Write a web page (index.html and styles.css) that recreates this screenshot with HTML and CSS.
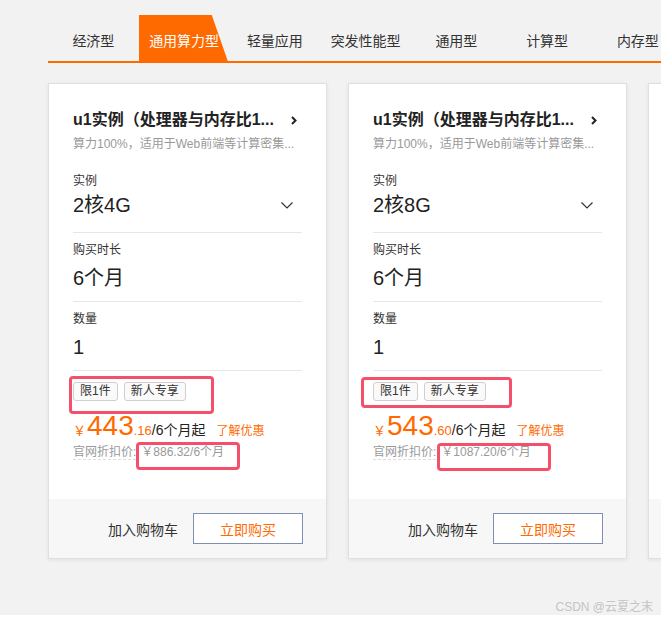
FILE: index.html
```html
<!DOCTYPE html>
<html lang="zh-CN">
<head>
<meta charset="utf-8">
<title>云服务器选购</title>
<link rel="stylesheet" href="styles.css">
</head>
<body>
<div class="page">
  <nav class="tabs">
    <div class="tab">经济型</div>
    <div class="tab active">通用算力型</div>
    <div class="tab">轻量应用</div>
    <div class="tab">突发性能型</div>
    <div class="tab">通用型</div>
    <div class="tab">计算型</div>
    <div class="tab">内存型</div>
  </nav>

  <div class="cards">
    <div class="card">
      <div class="card-body">
        <div class="title-row">
          <span class="title">u1实例（处理器与内存比1...</span>
          <svg class="chev-right" width="6" height="9" viewBox="0 0 6 9"><path d="M1 1 L4.5 4.5 L1 8" fill="none" stroke="#222" stroke-width="2"/></svg>
        </div>
        <div class="desc">算力100%，适用于Web前端等计算密集...</div>
        <div class="field">
          <div class="label">实例</div>
          <div class="value-row">
            <span class="value">2核4G</span>
            <svg class="chev-down" width="12" height="7" viewBox="0 0 12 7"><path d="M0.5 0.5 L6 6 L11.5 0.5" fill="none" stroke="#333" stroke-width="1.2"/></svg>
          </div>
        </div>
        <div class="field">
          <div class="label">购买时长</div>
          <div class="value-row"><span class="value">6个月</span></div>
        </div>
        <div class="field">
          <div class="label">数量</div>
          <div class="value-row"><span class="value">1</span></div>
        </div>
        <div class="tags"><span class="tag">限1件</span><span class="tag">新人专享</span></div>
        <div class="price"><span class="yen">￥</span><span class="big">443</span><span class="cents">.16</span><span class="unit">/6个月起</span><span class="more">了解优惠</span></div>
        <div class="orig"><span class="orig-label">官网折扣价:</span><span class="orig-val">￥886.32/6个月</span></div>
      </div>
      <div class="card-foot">
        <span class="cart">加入购物车</span>
        <button class="buy">立即购买</button>
      </div>
      <div class="mark m1a"></div>
      <div class="mark m1b"></div>
    </div>

    <div class="card">
      <div class="card-body">
        <div class="title-row">
          <span class="title">u1实例（处理器与内存比1...</span>
          <svg class="chev-right" width="6" height="9" viewBox="0 0 6 9"><path d="M1 1 L4.5 4.5 L1 8" fill="none" stroke="#222" stroke-width="2"/></svg>
        </div>
        <div class="desc">算力100%，适用于Web前端等计算密集...</div>
        <div class="field">
          <div class="label">实例</div>
          <div class="value-row">
            <span class="value">2核8G</span>
            <svg class="chev-down" width="12" height="7" viewBox="0 0 12 7"><path d="M0.5 0.5 L6 6 L11.5 0.5" fill="none" stroke="#333" stroke-width="1.2"/></svg>
          </div>
        </div>
        <div class="field">
          <div class="label">购买时长</div>
          <div class="value-row"><span class="value">6个月</span></div>
        </div>
        <div class="field">
          <div class="label">数量</div>
          <div class="value-row"><span class="value">1</span></div>
        </div>
        <div class="tags"><span class="tag">限1件</span><span class="tag">新人专享</span></div>
        <div class="price"><span class="yen">￥</span><span class="big">543</span><span class="cents">.60</span><span class="unit">/6个月起</span><span class="more">了解优惠</span></div>
        <div class="orig"><span class="orig-label">官网折扣价:</span><span class="orig-val">￥1087.20/6个月</span></div>
      </div>
      <div class="card-foot">
        <span class="cart">加入购物车</span>
        <button class="buy">立即购买</button>
      </div>
      <div class="mark m2a"></div>
      <div class="mark m2b"></div>
    </div>

    <div class="card">
      <div class="card-body"></div>
      <div class="card-foot"></div>
    </div>
  </div>

  <div class="watermark">CSDN @云夏之末</div>
</div>
</body>
</html>
```

FILE: styles.css
```css
html, body {
  margin: 0;
  padding: 0;
}
body {
  background: #ffffff;
  font-family: "Liberation Sans", "Noto Sans CJK SC", sans-serif;
  color: #333;
  overflow: hidden;
  width: 661px;
}
.page {
  position: relative;
  height: 615px;
  background: #f2f2f2;
  padding-left: 48px;
  box-sizing: border-box;
  overflow: hidden;
}

/* tabs */
.tabs {
  display: flex;
  margin-top: 15px;
  height: 48px;
  border-bottom: 2px solid #ff6a00;
  box-sizing: border-box;
  width: 700px;
}
.tab {
  position: relative;
  flex: 0 0 90.75px;
  height: 46px;
  display: flex;
  align-items: center;
  justify-content: center;
  padding-top: 4px;
  box-sizing: border-box;
  font-size: 14px;
  color: #333;
  white-space: nowrap;
}
.tab.active {
  color: #fff;
  z-index: 1;
  isolation: isolate;
}
.tab.active::before {
  content: "";
  position: absolute;
  left: 0;
  top: 0;
  bottom: 0;
  width: 90px;
  background: #ff6a00;
  clip-path: polygon(0 0, 73px 0, 89px 100%, 0 100%);
  z-index: -1;
}

/* cards */
.cards {
  display: flex;
  gap: 21px;
  margin-top: 20px;
  width: 900px;
}
.card {
  position: relative;
  flex: 0 0 279px;
  height: 476px;
  display: flex;
  flex-direction: column;
  background: #fff;
  border: 1px solid #e0e0e0;
  box-shadow: 0 1px 4px rgba(0, 0, 0, 0.08);
  box-sizing: border-box;
}
.card-body {
  flex: 1;
  padding: 24px 24px 0 24px;
}
.title-row {
  display: flex;
  align-items: center;
  justify-content: space-between;
  height: 24px;
}
.title {
  font-size: 16px;
  font-weight: bold;
  color: #222;
  line-height: 24px;
  white-space: nowrap;
  overflow: hidden;
}
.chev-right {
  margin-right: 5px;
  flex: none;
}
.desc {
  margin-top: 3px;
  font-size: 12px;
  line-height: 18px;
  color: #999;
  white-space: nowrap;
  overflow: hidden;
}
.field {
  padding: 8px 0 10px;
  border-bottom: 1px solid #e6e6e6;
}
.desc + .field {
  margin-top: 11px;
  padding-bottom: 14px;
}
.label {
  font-size: 12px;
  line-height: 18px;
  color: #333;
}
.value-row {
  margin-top: 6px;
  display: flex;
  align-items: center;
  justify-content: space-between;
  height: 26px;
}
.desc + .field .value-row {
  margin-top: 2px;
}
.value {
  font-size: 20px;
  line-height: 26px;
  color: #222;
}
.chev-down {
  margin-right: 9px;
}
.tags {
  display: flex;
  gap: 6px;
  margin-top: 11px;
}
.tag {
  font-size: 12px;
  line-height: 17px;
  padding: 0 6px;
  border: 1px solid #cfcfcf;
  border-radius: 3px;
  color: #333;
  background: #fafafa;
}
.price {
  margin-top: 10px;
  line-height: 30px;
  height: 30px;
  white-space: nowrap;
}
.yen {
  font-size: 13px;
  color: #ff6a00;
  margin-right: 1px;
}
.big {
  font-size: 28px;
  color: #ff6a00;
}
.cents {
  font-size: 13px;
  color: #ff6a00;
}
.unit {
  font-size: 14px;
  color: #222;
}
.more {
  font-size: 12px;
  color: #ff6a00;
  margin-left: 11px;
}
.orig {
  margin-top: 2px;
  font-size: 12px;
  line-height: 18px;
  color: #999;
  white-space: nowrap;
}
.orig-label {
  border-bottom: 1px dashed #ddd;
}
.orig-val {
  margin-left: 5px;
}
.card-foot {
  flex: 0 0 59px;
  background: #f7f7f7;
  display: flex;
  align-items: center;
  justify-content: flex-end;
  gap: 15px;
  padding-right: 23px;
}
.cart {
  font-size: 14px;
  color: #333;
}
.buy {
  width: 110px;
  height: 31px;
  background: #fff;
  border: 1px solid #7d8fb3;
  border-radius: 0;
  color: #ff6a00;
  font-size: 14px;
  font-family: "Liberation Sans", "Noto Sans CJK SC", sans-serif;
  padding: 0;
}

/* annotation boxes */
.mark {
  position: absolute;
  border: 3px solid #f5506b;
  border-radius: 4px;
  box-sizing: border-box;
}
.m1a { left: 20px; top: 292px; width: 145px; height: 38px; }
.m1b { left: 87px; top: 358px; width: 104px; height: 28px; }
.m2a { left: 12px; top: 293px; width: 151px; height: 31px; }
.m2b { left: 88px; top: 359px; width: 114px; height: 28px; }

.watermark {
  position: absolute;
  right: 8px;
  bottom: -1px;
  font-size: 12px;
  line-height: 18px;
  color: #c4c4c4;
}
```
